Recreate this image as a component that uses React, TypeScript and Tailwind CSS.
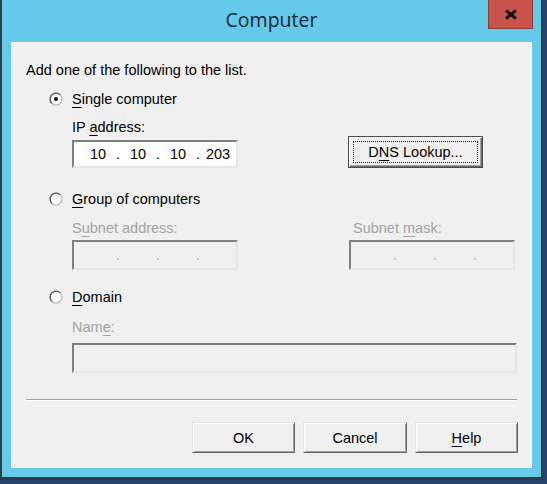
import React from "react"

const font = { fontFamily: '"Liberation Sans", Arial, sans-serif' }

function Radio({ checked }: { checked?: boolean }) {
  return (
    <svg width="14" height="14" viewBox="0 0 14 14" className="shrink-0">
      <circle cx="7" cy="7" r="6" fill="#ffffff" stroke="#b4b4b4" strokeWidth="1.2" />
      <path d="M2.76 11.24 A6 6 0 0 1 11.24 2.76" fill="none" stroke="#5a5a5a" strokeWidth="1.3" />
      {checked && <circle cx="7" cy="7" r="2" fill="#111111" />}
    </svg>
  )
}

function Key({ children }: { children: React.ReactNode }) {
  return <span className="underline decoration-1 underline-offset-[3px]">{children}</span>
}

function IpField({ parts, disabled }: { parts: string[]; disabled?: boolean }) {
  return (
    <div
      className={
        "flex h-full items-center pl-[6px] " +
        (disabled ? "text-[#a0a0a0]" : "text-black")
      }
    >
      {parts.map((p, i) => (
        <React.Fragment key={i}>
          {i > 0 && <span className="w-[4px] text-center">.</span>}
          <span className="w-[36px] text-center">{p}</span>
        </React.Fragment>
      ))}
    </div>
  )
}

function Sunken({ className, disabled, children }: { className: string; disabled?: boolean; children?: React.ReactNode }) {
  return (
    <div
      className={
        "border-2 border-t-[#7f7f7f] border-l-[#7f7f7f] border-r-[#e6e6e6] border-b-[#e6e6e6] " +
        (disabled ? "bg-[#f0f0f0] " : "bg-white ") +
        className
      }
    >
      {children}
    </div>
  )
}

function Button({ children, width }: { children: React.ReactNode; width: string }) {
  return (
    <button
      className={
        "flex h-[31px] items-center justify-center border border-t-[#e3e3e3] border-l-[#e3e3e3] border-r-[#646464] border-b-[#646464] bg-[#f0f0f0] text-black shadow-[inset_1px_1px_0_#ffffff,inset_-1px_-1px_0_#a0a0a0] " +
        width
      }
    >
      {children}
    </button>
  )
}

export default function App() {
  return (
    <div className="h-[484px] w-[547px] bg-[#24466c]" style={font}>
      <div className="flex h-[480px] w-[543px] flex-col border-b-[3px] border-l-2 border-r-2 border-[#2e3b48] bg-[#65caea]">
        {/* title bar */}
        <div className="grid h-[42px] grid-cols-[1fr_auto_1fr]">
          <div />
          <div
            className="pt-[5px] text-[19.5px] leading-[30px] text-[#1b2633]"
            style={{ fontFamily: '"Open Sans", "Noto Sans", sans-serif' }}
          >
            Computer
          </div>
          <div className="flex justify-end pr-[8px]">
            <div className="flex h-[29px] w-[45px] items-center justify-center border border-t-0 border-[#8e3c38] bg-[#c9544e]">
              <svg width="14" height="11" viewBox="0 0 14 11">
                <path d="M2 1.5 L12 9.5 M12 1.5 L2 9.5" stroke="#111" strokeWidth="3" />
              </svg>
            </div>
          </div>
        </div>

        {/* client area */}
        <div className="mx-[9px] flex h-[426px] flex-col border border-[#fafafa] bg-[#f0f0f0] pl-[14px] pt-[18px] text-[14.5px] leading-[18px] text-black">
          <div>Add one of the following to the list.</div>

          <div className="mt-[11px] flex items-center gap-[9px] pl-[23px]">
            <Radio checked />
            <span>
              <Key>S</Key>ingle computer
            </span>
          </div>

          <div className="mt-[10px] pl-[46px]">
            IP <Key>a</Key>ddress:
          </div>
          <div className="flex items-start pl-[46px]">
            <Sunken className="mt-[4px] h-[28px] w-[166px]">
              <IpField parts={["10", "10", "10", "203"]} />
            </Sunken>
            <button className="ml-[110px] flex h-[32px] w-[135px] border border-[#4a4a4a] bg-[#f0f0f0] p-[4px] shadow-[inset_1px_1px_0_#ffffff,inset_-1px_-1px_0_#6a6a6a,inset_-2px_-2px_0_#a0a0a0]">
              <span className="flex flex-1 items-center justify-center border border-dotted border-[#222]">
                D<Key>N</Key>S Lookup...
              </span>
            </button>
          </div>

          <div className="mt-[22px] flex items-center gap-[9px] pl-[23px]">
            <Radio />
            <span>
              <Key>G</Key>roup of computers
            </span>
          </div>

          <div className="mt-[11px] flex pl-[46px] text-[#a3a3a3]">
            <div className="flex w-[166px] flex-col">
              <div>
                S<Key>u</Key>bnet address:
              </div>
              <Sunken disabled className="mt-[3px] h-[30px] w-[166px]">
                <IpField disabled parts={["", "", "", ""]} />
              </Sunken>
            </div>
            <div className="ml-[111px] flex w-[166px] flex-col">
              <div className="pl-[4px]">
                Subnet <Key>m</Key>ask:
              </div>
              <Sunken disabled className="mt-[3px] h-[30px] w-[166px]">
                <IpField disabled parts={["", "", "", ""]} />
              </Sunken>
            </div>
          </div>

          <div className="mt-[18px] flex items-center gap-[9px] pl-[23px]">
            <Radio />
            <span>
              <Key>D</Key>omain
            </span>
          </div>

          <div className="mt-[12px] pl-[46px] text-[#a3a3a3]">
            Nam<Key>e</Key>:
          </div>
          <div className="mt-[7px] pl-[46px]">
            <Sunken disabled className="h-[30px] w-[445px]" />
          </div>

          <div className="mt-[26px] h-[2px] w-[491px] border-t border-b border-t-[#a0a0a0] border-b-white" />

          <div className="ml-[166px] mt-[21px] flex gap-[8px]">
            <Button width="w-[103px]">OK</Button>
            <Button width="w-[104px]">Cancel</Button>
            <Button width="w-[103px]">
              <span>
                <Key>H</Key>elp
              </span>
            </Button>
          </div>
        </div>
      </div>
    </div>
  )
}
